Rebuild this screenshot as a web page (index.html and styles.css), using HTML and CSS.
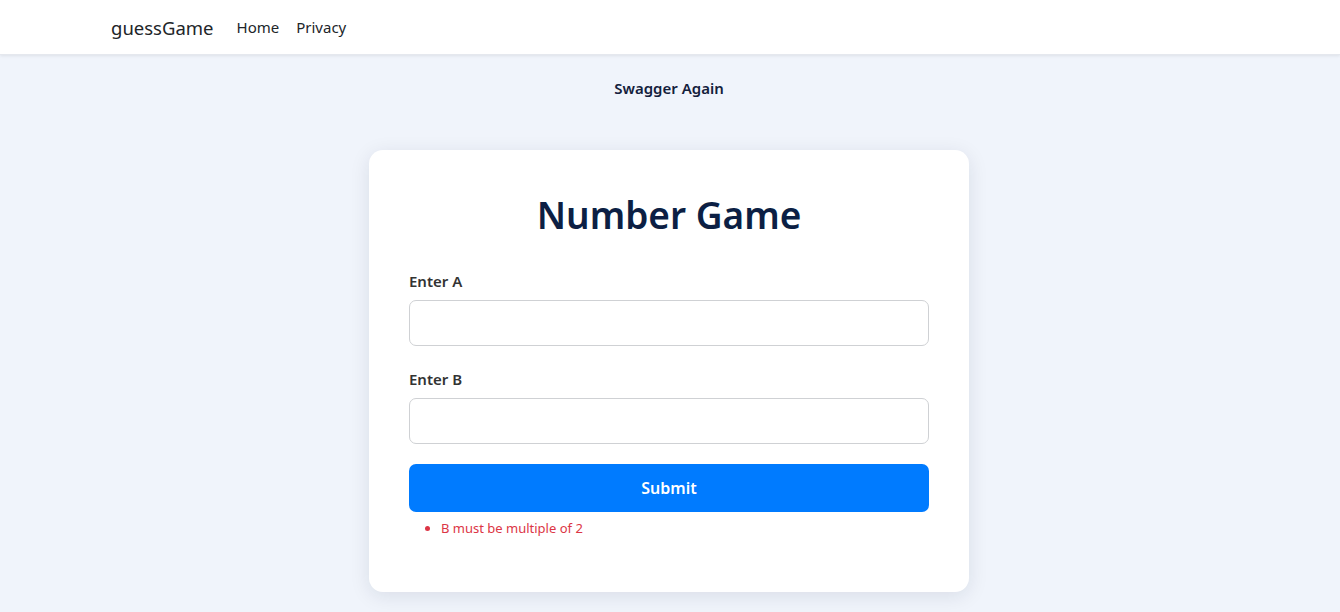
FILE: index.html
```html
<!DOCTYPE html>
<html lang="en">
<head>
    <meta charset="UTF-8">
    <meta name="viewport" content="width=device-width, initial-scale=1.0">
    <title>Number Game - guessGame</title>
    <link rel="stylesheet" href="styles.css">
</head>
<body>
    <!-- Navbar -->
    <header class="navbar">
        <div class="navbar-inner">
            <a class="brand" href="#">guessGame</a>
            <nav class="nav-links">
                <a href="#">Home</a>
                <a href="#">Privacy</a>
            </nav>
        </div>
    </header>

    <main class="page">
        <a class="swagger-link" href="#">Swagger Again</a>

        <div class="game-card">
            <h1>Number Game</h1>
            <form class="game-form">
                <div class="form-group">
                    <label for="inputA">Enter A</label>
                    <input type="text" id="inputA">
                </div>
                <div class="form-group">
                    <label for="inputB">Enter B</label>
                    <input type="text" id="inputB">
                </div>
                <button type="submit" class="submit-btn">Submit</button>
                <ul class="errors">
                    <li>B must be multiple of 2</li>
                </ul>
            </form>
        </div>
    </main>
</body>
</html>
```

FILE: styles.css
```css
/* Basic Reset */
* {
    margin: 0;
    padding: 0;
    box-sizing: border-box;
}

body {
    font-family: "Noto Sans", "Open Sans", sans-serif;
    background-color: #f0f4fb;
    color: #212529;
    min-height: 100vh;
}

a {
    text-decoration: none;
}

/* Navbar */
.navbar {
    background-color: #fff;
    height: 55px;
    box-shadow: 0 1px 3px rgba(0, 0, 0, 0.08);
    border-bottom: 1px solid #e5e8ee;
}

.navbar-inner {
    max-width: 1140px;
    margin: 0 auto;
    padding: 0 11px;
    height: 100%;
    display: flex;
    align-items: center;
}

.brand {
    font-size: 18.5px;
    color: #212529;
    margin-right: 23px;
}

.nav-links {
    display: flex;
    gap: 17px;
}

.nav-links a {
    font-size: 15px;
    color: #212529;
}

/* Page */
.page {
    display: flex;
    flex-direction: column;
    align-items: center;
    padding-right: 2px;
}

.swagger-link {
    margin-top: 23px;
    font-size: 15px;
    font-weight: 600;
    line-height: 20px;
    color: #13203b;
}

/* Card */
.game-card {
    width: 600px;
    margin-top: 52px;
    background: #fff;
    border-radius: 14px;
    padding: 38px 40px 40px;
    box-shadow: 0 4px 20px rgba(20, 30, 60, 0.1);
}

.game-card h1 {
    text-align: center;
    font-size: 37px;
    font-weight: 600;
    line-height: 54px;
    color: #0c1f44;
    margin-bottom: 29px;
}

.form-group {
    display: flex;
    flex-direction: column;
    margin-bottom: 23px;
}

.form-group:last-of-type {
    margin-bottom: 20px;
}

.form-group label {
    font-size: 15px;
    font-weight: 600;
    line-height: 20px;
    color: #333;
    margin-bottom: 9px;
}

.form-group input {
    height: 46px;
    border: 1px solid #cfd1d4;
    border-radius: 7px;
    padding: 0 12px;
    font-size: 16px;
    font-family: inherit;
}

.submit-btn {
    width: 100%;
    height: 48px;
    background-color: #007bff;
    color: #fff;
    border: none;
    border-radius: 7px;
    font-family: inherit;
    font-size: 16px;
    font-weight: 600;
    cursor: pointer;
}

.errors {
    margin: 6px 0 14px 32px;
    color: #dc3545;
    font-size: 13px;
    line-height: 20px;
}
```
